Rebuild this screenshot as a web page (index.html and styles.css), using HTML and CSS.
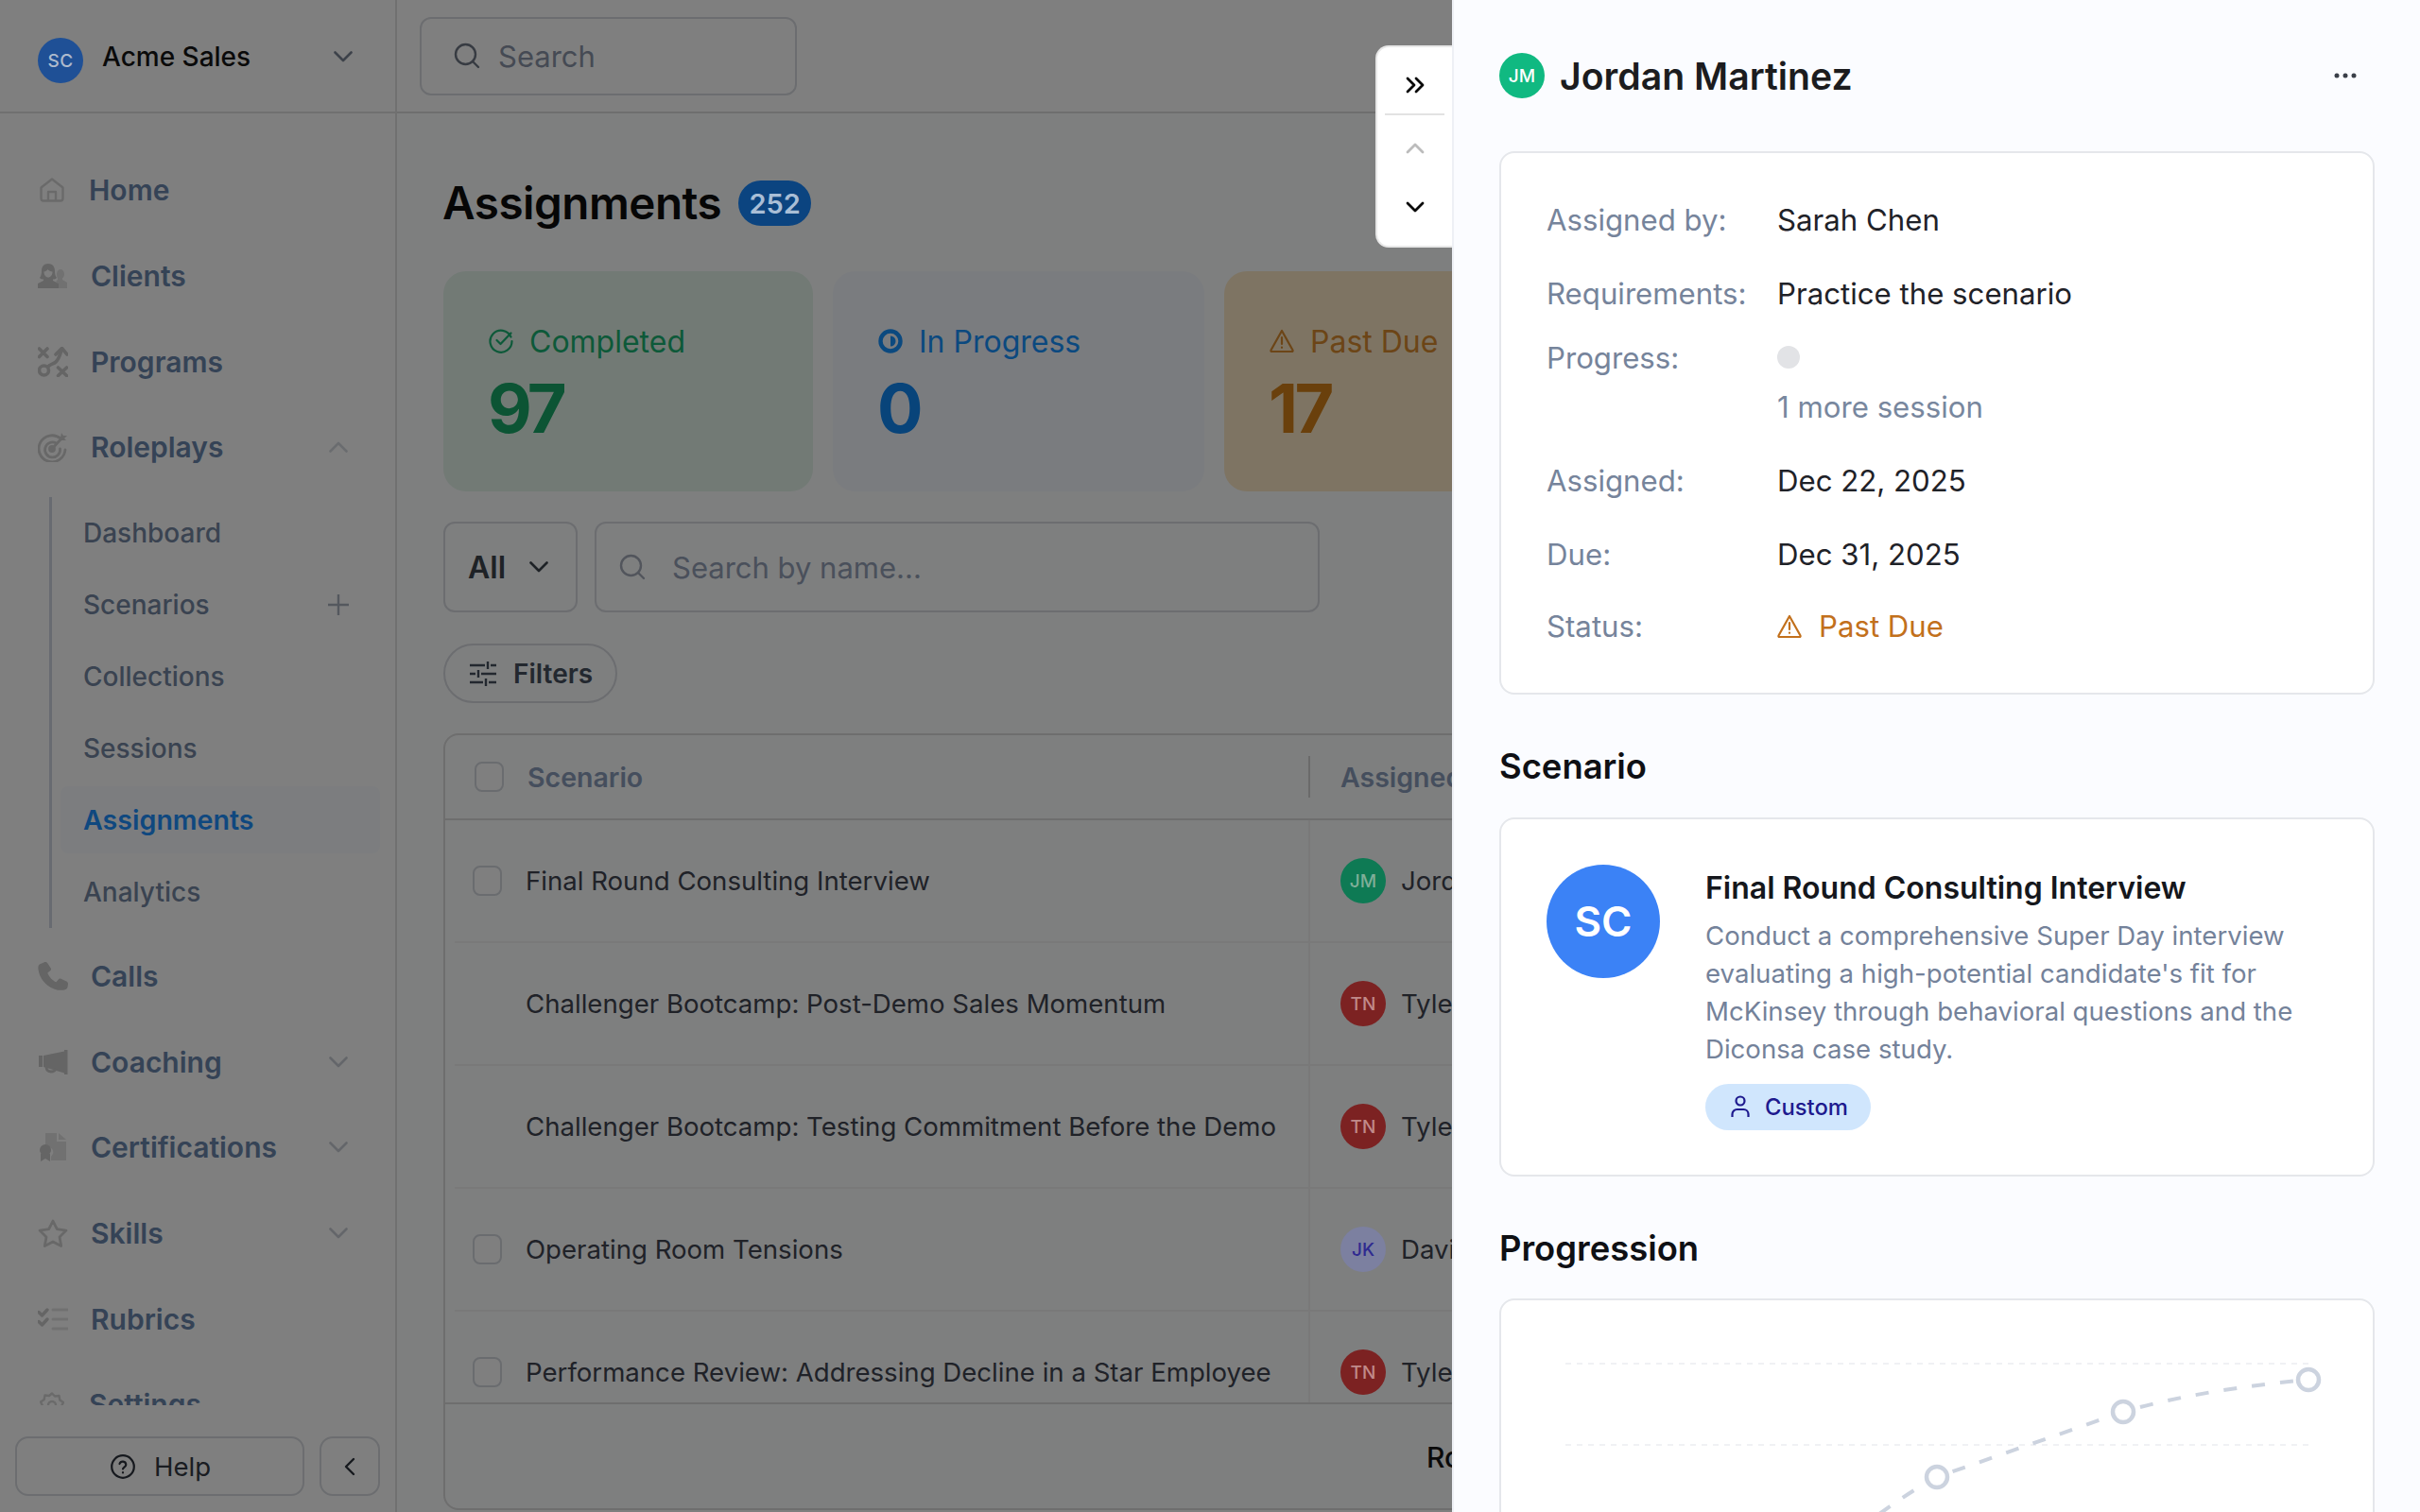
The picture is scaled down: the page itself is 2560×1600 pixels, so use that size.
FILE: index.html
```html
<!DOCTYPE html>
<html lang="en">
<head>
<meta charset="utf-8">
<title>Assignments</title>
<link rel="stylesheet" href="styles.css">
</head>
<body>
<div class="app">
  <aside class="sidebar">
    <div class="org">
      <span class="org-avatar lift">SC</span>
      <span class="org-name">Acme Sales</span>
      <svg class="chev org-chev" viewBox="0 0 20 12"><path d="M1.5 1.5 10 10l8.500-8.500"/></svg>
    </div>
    <nav class="nav">
      <a class="nav-item nav-item--home">
        <svg class="nav-ic ic-home" viewBox="0 0 26 26"><path d="M1.500 10.500 13 1.500l11.500 9V22a2.500 2.500 0 0 1-2.500 2.500H4A2.500 2.500 0 0 1 1.500 22z"/><path d="M9 24.500V15h8v9.500"/></svg>
        <span>Home</span>
      </a>
      <a class="nav-item">
        <svg class="nav-ic ic-fill" viewBox="0 0 32 26"><path class="back" d="M20 11c0-3 1.800-5 4-5s4 2 4 5c0 2-.8 3.500-2 4.500V17l5 3v6H22v-5l-3-2 2-2v-1.500c-.6-1-1-2.500-1-4.500z"/><path d="M11 0c4.500 0 7 3 7 7.500 0 3 .5 5.500 2 7.500-1 1-2.500 1.500-4 1.500V18l6 3v5H0v-5l6-3v-1.500c-1.500 0-3-.5-4-1.500 1.500-2 2-4.500 2-7.500C4 3 6.500 0 11 0zM6.500 8.500c0 3.500 2 6 4.500 6s4.500-2.500 4.500-6c-2 0-4-1-5-2.500-.8 1.500-2.500 2.500-4 2.500z"/></svg>
        <span>Clients</span>
      </a>
      <a class="nav-item">
        <svg class="nav-ic ic-bold" viewBox="0 0 32 32"><path d="M1.500 2 10 10.500M10 2l-8.500 8.500M21.500 22l9 8.500M30.500 22l-9 8.500"/><circle cx="6.500" cy="25" r="5"/><path d="M10.500 21.500c2-3.500 5.500-3 8-5s4-4 6.500-13"/><path d="M19 8l6.500-6.500L31 8"/></svg>
        <span>Programs</span>
      </a>
      <a class="nav-item">
        <svg class="nav-ic ic-mid" viewBox="0 0 32 32"><path d="M24 7a14 14 0 1 0 5 12"/><path d="M19.500 12a8 8 0 1 0 4 6"/><circle cx="15" cy="18" r="2.500"/><path d="M15 18 26 6"/><path class="solid" d="M24 6l1-5 2 3 4 0-3 3 2 2-5 0z"/></svg>
        <span>Roleplays</span>
        <svg class="chev nav-chev chev-light" viewBox="0 0 20 12"><path d="M1.500 10.500 10 2l8.500 8.500"/></svg>
      </a>
      <div class="subnav">
        <a class="sub-item">Dashboard</a>
        <a class="sub-item"><span>Scenarios</span><svg class="plus" viewBox="0 0 22 22"><path d="M11 0v22M0 11h22"/></svg></a>
        <a class="sub-item">Collections</a>
        <a class="sub-item">Sessions</a>
        <a class="sub-item sub-item--active">Assignments</a>
        <a class="sub-item">Analytics</a>
      </div>
      <a class="nav-item">
        <svg class="nav-ic ic-fill" viewBox="0 0 28 26"><path d="M6 0 1.500 2C.5 3 0 4 .5 7c1 6 3.500 10 8 14 4 3.500 9 5 13 5 3 0 5-.5 6-2.500l.5-3.500c0-1-.5-1.500-1-2l-5.500-2.500c-1-.5-2-.2-2.500.5l-2 2.500c-3-1-6.500-4.500-8-8.500L11.500 8c.7-.5 1-1.500.5-2.500L9 1C8.500 0 7 -.3 6 0z"/></svg>
        <span>Calls</span>
      </a>
      <a class="nav-item">
        <svg class="nav-ic ic-fill" viewBox="0 0 32 26"><path d="M1 6h4v12H1zM6 6 28 1.500V0h3.500v26H28v-1.500L6 18z"/><path class="ring" d="M9 18c0 3 2 5 5 5s4.500-1 5-3"/></svg>
        <span>Coaching</span>
        <svg class="chev nav-chev" viewBox="0 0 20 12"><path d="M1.500 1.500 10 10l8.500-8.500"/></svg>
      </a>
      <a class="nav-item">
        <svg class="nav-ic ic-fill" viewBox="0 0 32 30"><path class="back" d="M8 0h12v9h10v20H14v-4l2-3c1-3-.5-6-4-7-1.500-.3-3 0-4 .5z"/><path class="back" d="M22 0l8 7h-8z"/><circle cx="8" cy="18" r="6"/><path d="M3 22v8l5-3 5 3v-8z"/></svg>
        <span>Certifications</span>
        <svg class="chev nav-chev" viewBox="0 0 20 12"><path d="M1.500 1.500 10 10l8.500-8.500"/></svg>
      </a>
      <a class="nav-item">
        <svg class="nav-ic ic-mid" viewBox="0 0 32 30"><path d="M16 2l4.300 8.700 9.700 1.400-7 6.800 1.700 9.600-8.700-4.600-8.700 4.600 1.700-9.600-7-6.800 9.700-1.400z"/></svg>
        <span>Skills</span>
        <svg class="chev nav-chev" viewBox="0 0 20 12"><path d="M1.500 1.500 10 10l8.500-8.500"/></svg>
      </a>
      <a class="nav-item">
        <svg class="nav-ic ic-list" viewBox="0 0 32 24"><path class="ck" d="M1 4.500 4.500 8 10 2M1 14.500 4.500 18 10 12"/><path class="ln" d="M16 2h16M16 12h16M16 22h16"/></svg>
        <span>Rubrics</span>
      </a>
      <a class="nav-item nav-item--home">
        <svg class="nav-ic ic-home" viewBox="0 0 26 26"><path d="M13 1.500l3 3 4.500-.5.800 4.500 3.700 2.500-2 4 2 4-3.700 2.500-.8 4.500-4.500-.5-3 3-3-3-4.500.5-.8-4.500L1 18.500l2-4-2-4 3.700-2.500.8-4.500 4.500.5z"/><circle cx="13" cy="14" r="4"/></svg>
        <span>Settings</span>
      </a>
    </nav>
    <div class="side-foot">
      <button class="help-btn">
        <svg class="help-ic" viewBox="0 0 26 26"><circle cx="13" cy="13" r="11.800"/><path d="M9.500 10a3.500 3.500 0 0 1 6.800 1c0 2.300-3.300 2.800-3.300 4.500"/><path d="M13 19.200v.2"/></svg>
        <span>Help</span>
      </button>
      <button class="collapse-btn"><svg class="collapse-ic" viewBox="0 0 12 20"><path d="M10 2 2 10l8 8"/></svg></button>
    </div>
  </aside>

  <main class="main">
    <header class="topbar">
      <div class="top-search">
        <svg class="search-ic" viewBox="0 0 28 28"><circle cx="12.500" cy="12.500" r="10.500"/><path d="M20 20l6 6"/></svg>
        <span>Search</span>
      </div>
    </header>
    <div class="content">
      <div class="title-row">
        <h1 class="title">Assignments</h1>
        <span class="count-badge lift">252</span>
      </div>
      <div class="stats">
        <div class="stat stat--green">
          <div class="stat-label"><svg class="stat-ic" viewBox="0 0 26 26"><path d="M23.500 8.500A11.500 11.500 0 1 0 24.500 13"/><path d="M8.500 12l4 4 11-11.500"/></svg><span>Completed</span></div>
          <div class="stat-num">97</div>
        </div>
        <div class="stat stat--blue">
          <div class="stat-label"><svg class="stat-ic stat-ic--prog" viewBox="0 0 26 26"><circle cx="13" cy="13" r="10.500"/><path class="half" d="M13 7.500a5.500 5.500 0 0 1 0 11z"/></svg><span>In Progress</span></div>
          <div class="stat-num">0</div>
        </div>
        <div class="stat stat--orange">
          <div class="stat-label"><svg class="stat-ic" viewBox="0 0 26 26"><path d="M13 2 1.500 22.500a1 1 0 0 0 1 1.500h21a1 1 0 0 0 1-1.500z"/><path d="M13 9v7M13 19.500v.3"/></svg><span>Past Due</span></div>
          <div class="stat-num">17</div>
        </div>
      </div>
      <div class="filter-row">
        <div class="select"><span>All</span><svg class="chev sel-chev" viewBox="0 0 20 12"><path d="M1.500 1.500 10 10l8.500-8.500"/></svg></div>
        <div class="name-search">
          <svg class="search-ic search-ic--light" viewBox="0 0 28 28"><circle cx="12.500" cy="12.500" r="10.500"/><path d="M20 20l6 6"/></svg>
          <span>Search by name...</span>
        </div>
      </div>
      <button class="filters">
        <svg class="filters-ic" viewBox="0 0 28 28"><path d="M0 5h16M22 5h6M0 14h6M12 14h16M0 23h14M20 23h8M19 1v8M9 10v8M17 19v8"/></svg>
        <span>Filters</span>
      </button>
      <section class="table">
        <div class="thead">
          <div class="th th--main"><span class="check check--head"></span><span>Scenario</span></div>
          <div class="th th--assignee"><span>Assigned To</span></div>
        </div>
        <div class="tbody">
          <div class="tr">
            <div class="td td--main"><span class="check"></span><span>Final Round Consulting Interview</span></div>
            <div class="td td--assignee"><span class="avatar avatar--green lift">JM</span><span>Jordan Martinez</span></div>
          </div>
          <div class="tr">
            <div class="td td--main"><span class="check check--none"></span><span>Challenger Bootcamp: Post-Demo Sales Momentum</span></div>
            <div class="td td--assignee"><span class="avatar avatar--red lift">TN</span><span>Tyler Nguyen</span></div>
          </div>
          <div class="tr">
            <div class="td td--main"><span class="check check--none"></span><span>Challenger Bootcamp: Testing Commitment Before the Demo</span></div>
            <div class="td td--assignee"><span class="avatar avatar--red lift">TN</span><span>Tyler Nguyen</span></div>
          </div>
          <div class="tr">
            <div class="td td--main"><span class="check"></span><span>Operating Room Tensions</span></div>
            <div class="td td--assignee"><span class="avatar avatar--violet lift">JK</span><span>David Kim</span></div>
          </div>
          <div class="tr">
            <div class="td td--main"><span class="check"></span><span>Performance Review: Addressing Decline in a Star Employee</span></div>
            <div class="td td--assignee"><span class="avatar avatar--red lift">TN</span><span>Tyler Nguyen</span></div>
          </div>
        </div>
        <div class="tfoot">Rows per page</div>
      </section>
    </div>
  </main>

  <div class="scrim"></div>

  <aside class="panel">
    <div class="pager">
      <button class="pager-btn pager-btn--top"><svg class="pager-ic" viewBox="0 0 20 20"><path d="M2 3l7 7-7 7M11 3l7 7-7 7"/></svg></button>
      <button class="pager-btn"><svg class="pager-ic pager-ic--off" viewBox="0 0 20 12"><path d="M2 10l8-8 8 8"/></svg></button>
      <button class="pager-btn"><svg class="pager-ic" viewBox="0 0 20 12"><path d="M2 2l8 8 8-8"/></svg></button>
    </div>
    <header class="panel-head">
      <span class="panel-avatar">JM</span>
      <h2 class="panel-name">Jordan Martinez</h2>
      <svg class="dots" viewBox="0 0 24 6"><circle cx="3" cy="3" r="2.500"/><circle cx="12" cy="3" r="2.500"/><circle cx="21" cy="3" r="2.500"/></svg>
    </header>
    <section class="card details">
      <div class="row"><span class="row-label">Assigned by:</span><span class="row-value">Sarah Chen</span></div>
      <div class="row"><span class="row-label">Requirements:</span><span class="row-value">Practice the scenario</span></div>
      <div class="row row--progress">
        <span class="row-label">Progress:</span>
        <div class="row-value"><span class="dot"></span><span class="more">1 more session</span></div>
      </div>
      <div class="row"><span class="row-label">Assigned:</span><span class="row-value">Dec 22, 2025</span></div>
      <div class="row"><span class="row-label">Due:</span><span class="row-value">Dec 31, 2025</span></div>
      <div class="row row--last"><span class="row-label">Status:</span><span class="row-value status"><svg class="status-ic" viewBox="0 0 26 26"><path d="M13 2 1.500 22.500a1 1 0 0 0 1 1.500h21a1 1 0 0 0 1-1.500z"/><path d="M13 9v7M13 19.500v.3"/></svg><span>Past Due</span></span></div>
    </section>
    <h3 class="section-title">Scenario</h3>
    <section class="card scenario">
      <span class="scenario-avatar">SC</span>
      <div class="scenario-body">
        <h4 class="scenario-title">Final Round Consulting Interview</h4>
        <p class="scenario-desc">Conduct a comprehensive Super Day interview evaluating a high-potential candidate's fit for McKinsey through behavioral questions and the Diconsa case study.</p>
        <span class="pill"><svg class="pill-ic" viewBox="0 0 20 24"><circle cx="10" cy="6" r="4.500"/><path d="M1.500 23v-3a5 5 0 0 1 5-5h7a5 5 0 0 1 5 5v3"/></svg><span>Custom</span></span>
      </div>
    </section>
    <h3 class="section-title">Progression</h3>
    <section class="card chart-card">
      <svg class="chart" viewBox="0 0 921 400">
        <path class="grid" d="M68 67H854M68 153H854"/>
        <path class="line" d="M400 226C420 212 440 198 461 187L658 118C720 100 790 90 854 84"/>
        <circle class="pt" cx="461" cy="187" r="11"/>
        <circle class="pt" cx="658" cy="118" r="11"/>
        <circle class="pt" cx="854" cy="84" r="11"/>
      </svg>
    </section>
  </aside>
</div>
</body>
</html>
```

FILE: styles.css
```css
* { box-sizing: border-box; }
html, body { margin: 0; padding: 0; }
body { font-family: Inter, "Noto Sans", "Liberation Sans", sans-serif; background: #fff; }
button { font-family: inherit; background: none; padding: 0; cursor: pointer; }
h1, h2, h3, h4, p { margin: 0; }

.app { position: relative; display: flex; width: 2560px; height: 1600px; overflow: hidden; background: #fff; }
.scrim { position: absolute; inset: 0; background: rgba(0, 0, 0, .5); z-index: 10; }
.lift { position: relative; z-index: 15; }

/* sidebar */
.sidebar { flex: 0 0 420px; display: flex; flex-direction: column; height: 1600px; border-right: 2px solid #e0e0e0; background: #fff; }
.org { flex: 0 0 120px; display: flex; align-items: center; padding: 2px 0 0 40px; border-bottom: 2px solid #e0e0e0; }
.org-avatar { width: 48px; height: 48px; margin-top: 8px; border-radius: 50%; background: #1f5096; color: #aebbcd; font-size: 19px; font-weight: 500; display: flex; align-items: center; justify-content: center; letter-spacing: .5px; }
.org-name { margin-left: 20px; font-size: 28px; font-weight: 500; color: #141414; width: 245px; }
.chev { fill: none; stroke-width: 2.6; stroke-linecap: round; stroke-linejoin: round; }
.org-chev { width: 20px; height: 12px; stroke: #7a8494; }

.nav { flex: 0 0 1367px; height: 1367px; overflow: hidden; padding-top: 36px; }
.nav-item { display: flex; align-items: center; height: 90.67px; padding: 0 50px 0 40px; font-size: 30px; font-weight: 600; color: #6b86ad; }
.nav-item--home { padding-left: 42px; }
.nav-item span { flex: 1; }
.nav-ic { width: 32px; height: 32px; margin-right: 24px; flex: none; }
.ic-home { width: 26px; height: 26px; margin-right: 26px; fill: none; stroke: #d4d4d4; stroke-width: 2.4; stroke-linejoin: round; }
.ic-fill { fill: #cacaca; }
.ic-fill .back { fill: #e2e2e2; }
.ic-fill .ring { fill: none; stroke: #cacaca; stroke-width: 3; }
.ic-bold { fill: none; stroke: #cacaca; stroke-width: 3.600; stroke-linecap: round; stroke-linejoin: round; }
.ic-mid { fill: none; stroke: #d0d0d0; stroke-width: 2.800; stroke-linecap: round; stroke-linejoin: round; }
.ic-mid .solid { fill: #d0d0d0; stroke: none; }
.ic-list { fill: none; stroke-linecap: round; stroke-linejoin: round; }
.ic-list .ck { stroke: #cacaca; stroke-width: 3.400; }
.ic-list .ln { stroke: #e2e2e2; stroke-width: 3; }
.nav-chev { width: 20px; height: 12px; stroke: #c8cdd4; }
.chev-light { stroke: #d4d8de; }

.subnav { margin: 7px 16px 6px 52px; height: 456px; border-left: 3px solid #d0d6e2; display: flex; flex-direction: column; }
.sub-item { flex: 0 0 71px; margin: 2.5px 0 2.5px 9px; padding: 0 33px 0 24px; display: flex; align-items: center; justify-content: space-between; font-size: 28px; font-weight: 500; color: #7487a2; border-radius: 8px; }
.sub-item--active { background: #f8fbff; color: #1e90ff; font-weight: 600; font-size: 28.6px; }
.plus { width: 22px; height: 22px; stroke: #a8b0bc; stroke-width: 2.400; fill: none; }

.side-foot { flex: 1; display: flex; gap: 16px; padding: 33px 16px 0; }
.help-btn { width: 306px; height: 63px; padding-left: 2px; border: 2px solid #d8dbe0; border-radius: 14px; display: flex; align-items: center; justify-content: center; gap: 20px; font-size: 27.6px; color: #343a44; }
.help-ic { width: 26px; height: 26px; fill: none; stroke: #2c323c; stroke-width: 2.200; stroke-linecap: round; }
.collapse-btn { width: 64px; height: 63px; border: 2px solid #d8dbe0; border-radius: 14px; display: flex; align-items: center; justify-content: center; }
.collapse-ic { width: 12px; height: 20px; fill: none; stroke: #2c323c; stroke-width: 2.400; stroke-linecap: round; stroke-linejoin: round; }

/* main */
.main { flex: 0 0 1116px; min-width: 0; height: 1600px; display: flex; flex-direction: column; background: #fcfeff; overflow: hidden; }
.topbar { flex: 0 0 120px; display: flex; align-items: center; padding: 0 0 0 24px; border-bottom: 2px solid #dcdcdc; background: #fff; }
.top-search { flex: none; width: 399px; height: 83px; border: 2px solid #d8dbe0; border-radius: 12px; display: flex; align-items: center; padding-left: 34px; gap: 19px; font-size: 31px; color: #8b95a8; }
.search-ic { width: 28px; height: 28px; fill: none; stroke: #6e7684; stroke-width: 2.400; stroke-linecap: round; }
.search-ic--light { stroke: #a4abb8; }
.content { padding: 65px 0 0 49px; flex: 1; display: flex; flex-direction: column; overflow: hidden; }
.title-row { display: flex; align-items: center; gap: 18px; height: 60px; }
.title { margin-left: -1px; font-size: 47.6px; font-weight: 600; color: #0c0c0c; letter-spacing: -.5px; line-height: 60px; }
.count-badge { width: 77px; height: 48px; border-radius: 24px; background: #0b4480; color: #a9bed6; font-size: 29px; font-weight: 600; display: flex; align-items: center; justify-content: center; }
.stats { display: flex; gap: 21px; margin-top: 42px; height: 233px; flex: none; }
.stat { flex: 0 0 391px; height: 233px; border-radius: 24px; padding: 53px 0 0 48px; }
.stat--green { background: #e4f5ea; color: #1ab272; }
.stat--blue { background: #f4f8ff; color: #1692ff; flex-basis: 393px; }
.stat--orange { background: #fce9c6; color: #d98a2e; flex-basis: 420px; }
.stat-label { display: flex; align-items: center; gap: 17px; height: 42px; font-size: 32px; white-space: nowrap; }
.stat-ic { width: 26px; height: 26px; flex: none; fill: none; stroke: currentColor; stroke-width: 2.200; stroke-linecap: round; stroke-linejoin: round; }
.stat-ic--prog { stroke-width: 4.400; }
.stat-ic--prog .half { fill: currentColor; stroke: none; }
.stat-num { margin-top: 8px; margin-left: -1px; font-size: 72px; font-weight: 700; line-height: 84px; letter-spacing: -3.5px; }
.stat--green .stat-num { color: #18a868; }
.stat--blue .stat-num { color: #1088f4; }
.stat--orange .stat-num { color: #d48018; }

.filter-row { display: flex; gap: 18px; margin-top: 32px; flex: none; }
.select { width: 142px; height: 96px; border: 2px solid #d8dbe0; border-radius: 12px; display: flex; align-items: center; padding-left: 24px; gap: 25px; font-size: 32px; font-weight: 600; color: #3c444c; }
.sel-chev { width: 20px; height: 12px; stroke: #3c444c; }
.name-search { width: 767px; height: 96px; border: 2px solid #d8dbe0; border-radius: 12px; display: flex; align-items: center; padding-left: 24px; gap: 28px; font-size: 31px; color: #94a0b6; }
.filters { flex: none; margin-top: 33px; width: 184px; height: 63px; border: 2px solid #d8dbe0; border-radius: 32px; display: flex; align-items: center; padding-left: 26px; gap: 18px; font-size: 28px; font-weight: 600; color: #46505e; }
.filters-ic { width: 28px; height: 28px; fill: none; stroke: #46505e; stroke-width: 2.400; }

.table { flex: none; margin-top: 32px; width: 1800px; height: 822px; border: 2px solid #dcdcdc; border-radius: 16px; display: flex; flex-direction: column; overflow: hidden; }
.thead { flex: 0 0 90px; display: flex; align-items: center; border-bottom: 2px solid #dcdcdc; }
.th { font-size: 28.5px; font-weight: 600; color: #8a9dbb; display: flex; align-items: center; white-space: nowrap; }
.th--main { flex: 0 0 915px; height: 44px; border-right: 2px solid #d4d4d4; padding-left: 31px; gap: 25px; }
.th--assignee { padding-left: 32px; }
.check { flex: none; width: 31px; height: 32px; border: 2px solid #d4d8de; border-radius: 8px; background: #fff; }
.check--none { visibility: hidden; }
.tbody { flex: 0 0 616px; height: 616px; overflow: hidden; }
.tr { display: flex; height: 130px; margin-left: 10px; border-bottom: 2px solid #f2f2f2; }
.td { display: flex; align-items: center; font-size: 27.6px; color: #404450; white-space: nowrap; }
.td--main { flex: 0 0 905px; padding-left: 19px; gap: 25px; border-right: 2px solid #f2f2f2; }
.td--assignee { padding-left: 32px; gap: 16px; }
.avatar { flex: none; width: 48px; height: 48px; border-radius: 50%; display: flex; align-items: center; justify-content: center; font-size: 19px; font-weight: 500; }
.avatar--green { background: #0e7a54; color: #7fae98; }
.avatar--red { background: #7c2222; color: #c08a8a; }
.avatar--violet { background: #7c80a0; color: #2f2a90; }
.tfoot { flex: 1; display: flex; align-items: center; padding: 2px 0 0 1038px; border-top: 2px solid #dcdcdc; font-size: 30px; font-weight: 500; color: #141414; white-space: nowrap; }

/* panel */
.panel { position: absolute; top: 0; right: 0; width: 1024px; height: 1600px; background: #fbfcff; border-left: 2px solid #eef0f5; padding: 0 48px 0 48px; z-index: 20; }
.pager { position: absolute; left: -83px; top: 48px; width: 81px; height: 214px; background: #fff; border: 2px solid #e8e8e8; border-right: 0; border-radius: 14px 0 0 14px; display: flex; flex-direction: column; align-items: stretch; }
.pager-btn { border: 0; height: 62px; display: flex; align-items: center; justify-content: center; padding-left: 0; }
.pager-btn--top { height: 72px; padding-top: 10px; margin: 0 8px 4px 8px; border-bottom: 2px solid #e2e2e2; }
.pager-ic { width: 20px; height: 20px; fill: none; stroke: #0a0a0a; stroke-width: 2.800; stroke-linecap: round; stroke-linejoin: round; }
.pager-ic--off { stroke: #bcbcbc; }
.panel-head { display: flex; align-items: center; height: 160px; }
.panel-avatar { width: 48px; height: 48px; border-radius: 50%; background: #10b981; color: #fff; font-size: 19px; font-weight: 500; display: flex; align-items: center; justify-content: center; flex: none; }
.panel-name { flex: 1; margin-left: 16px; font-size: 39.2px; font-weight: 600; color: #1c1c1e; }
.dots { width: 24px; height: 6px; margin-right: 19px; fill: #3a3f48; }
.card { background: #fff; border: 2px solid #e5e7eb; border-radius: 16px; }
.details { height: 575px; padding: 47px 48px 0; }
.row { display: flex; min-height: 48px; margin-bottom: 29.5px; font-size: 31.2px; line-height: 48px; }
.row-label { flex: 0 0 244px; color: #76849b; }
.row-value { color: #1f2228; }
.row--progress { margin-top: -9px; margin-bottom: 30px; }
.row--progress .row-value { display: flex; flex-direction: column; align-items: flex-start; }
.dot { width: 24px; height: 24px; border-radius: 50%; background: #e2e3e6; margin: 11px 0 17px; }
.more { color: #78879e; }
.row--last { margin-bottom: 0; margin-top: -1.5px; }
.status { display: flex; align-items: center; gap: 18px; color: #c2701c; }
.status-ic { width: 26px; height: 26px; fill: none; stroke: #c2701c; stroke-width: 2.200; stroke-linecap: round; stroke-linejoin: round; }
.section-title { margin: 52px 0 29.5px; font-size: 36.4px; font-weight: 600; line-height: 48px; color: #0f1014; }
.scenario { height: 380px; display: flex; padding: 48px 48px 0; gap: 48px; }
.scenario-avatar { flex: none; width: 120px; height: 120px; border-radius: 50%; background: #3b82f6; color: #fff; font-size: 44px; font-weight: 600; display: flex; align-items: center; justify-content: center; }
.scenario-body { flex: 1; min-width: 0; }
.scenario-title { margin-top: 3px; font-size: 32px; font-weight: 600; line-height: 44px; color: #15171c; white-space: nowrap; }
.scenario-desc { margin-top: 8px; width: 650px; font-size: 27.6px; line-height: 40px; color: #74829a; }
.pill { margin-top: 17px; width: 175px; height: 49px; border-radius: 25px; background: #d0e6fd; display: flex; align-items: center; padding-left: 27px; gap: 16px; font-size: 23.8px; font-weight: 500; color: #1e1a8e; }
.pill-ic { width: 20px; height: 24px; flex: none; fill: none; stroke: #1e1a8e; stroke-width: 2.200; }
.chart-card { height: 420px; }
.chart { display: block; width: 921px; height: 400px; fill: none; }
.grid { stroke: #f0f1f4; stroke-width: 2; stroke-dasharray: 6 6; }
.line { stroke: #ccd3df; stroke-width: 4; stroke-dasharray: 14 16; }
.pt { fill: #fff; stroke: #ccd3df; stroke-width: 4.500; }
```
